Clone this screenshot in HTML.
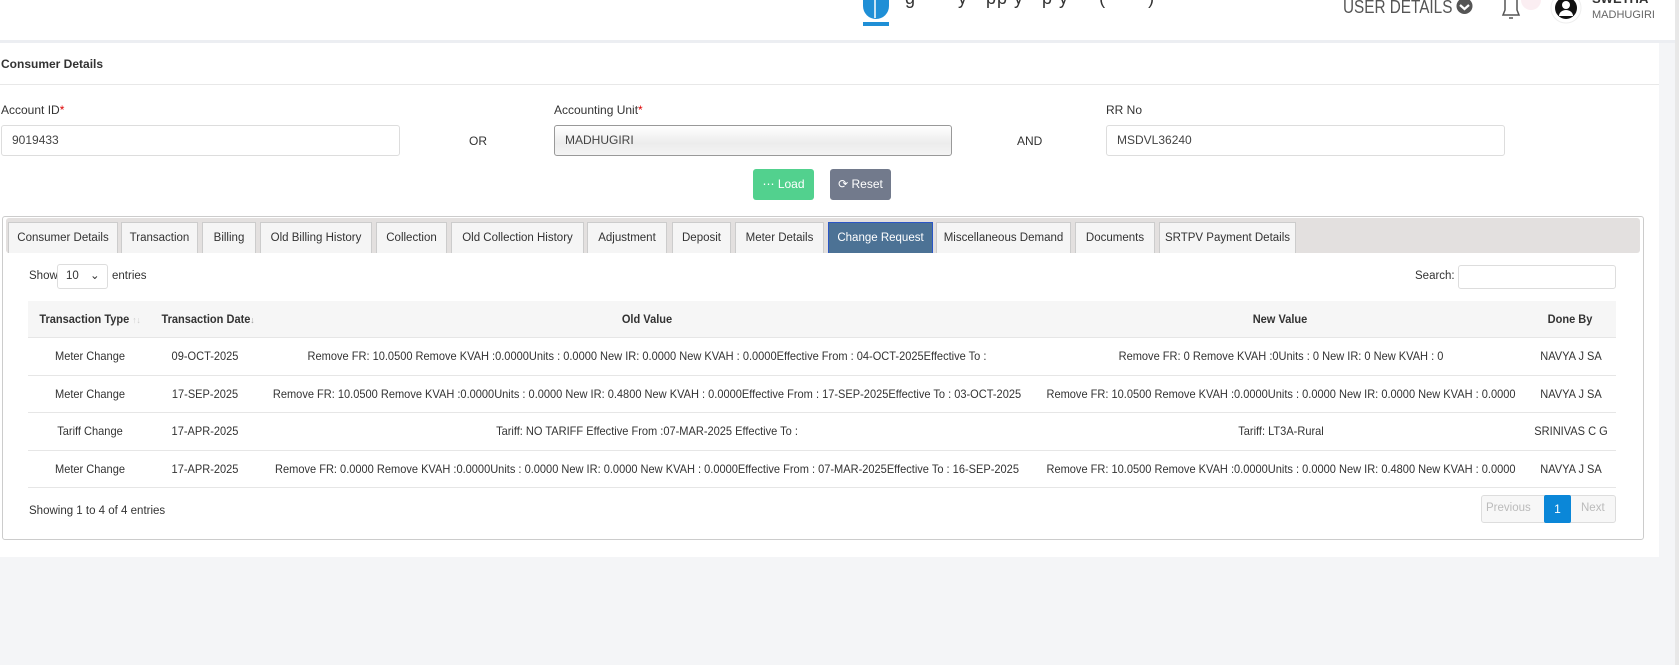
<!DOCTYPE html>
<html><head><meta charset="utf-8">
<style>
*{box-sizing:border-box;margin:0;padding:0}
body{width:1679px;height:665px;overflow:hidden;background:#f4f5f7;font-family:"Liberation Sans",sans-serif;font-size:12px;color:#333;position:relative}
.abs{position:absolute}
.hdr{left:0;top:0;width:1675px;height:40px;background:#fff}
.sb{left:1675px;top:0;width:4px;height:665px;background:#e8e8e8}
.card{left:0;top:43px;width:1659px;height:514px;background:#fff}
.lbl{font-size:12px;color:#333}
.inp{border:1px solid #ddd;border-radius:3px;background:#fff;font-size:12px;padding-left:10px;line-height:29px;color:#444}
.tabs{left:2px;top:216px;width:1642px;height:324px;border:1px solid #ccc;border-radius:3px;background:#fff}
.bar{left:6px;top:218px;width:1634px;height:35px;background:#e3e0df;border-radius:3px}
.tab{top:222px;height:31px;background:#f5f5f5;border:1px solid #ccc;border-bottom:none;font-size:11.5px;color:#333;text-align:center;line-height:30px;white-space:nowrap}
.tab.act{background:#4c7295;color:#fff;border-color:#2a56c6}
.th{top:301px;height:36px;background:#f6f6f6;left:28px;width:1588px}
.c{position:absolute;text-align:center;white-space:nowrap;font-size:12px;transform:translateX(-50%) scaleX(0.92)}
.hl{position:absolute;left:28px;width:1588px;height:1px;background:#e6e6e6}
</style></head><body>
<div class="abs hdr"></div>
<div class="abs" style="left:0;top:40px;width:1675px;height:3px;background:#eceef2"></div>
<div class="abs sb"></div>
<svg class="abs" style="left:860px;top:0" width="32" height="28" viewBox="0 0 32 28"><path d="M3 0h26v6a13 13 0 0 1-26 0z" fill="#1f8fd6"/><path d="M15 0v18" stroke="#fff" stroke-width="1.5"/><rect x="3" y="22" width="26" height="4" fill="#1f8fd6"/></svg>
<div class="abs" style="left:905px;top:-12px;font-size:18px;color:#333;white-space:nowrap;letter-spacing:1px">g &nbsp; &nbsp; &nbsp; y &nbsp; pp y &nbsp; p y &nbsp; &nbsp; ( &nbsp; &nbsp; &nbsp; ) &nbsp;</div>
<div class="abs" style="left:1343px;top:-3px;font-size:18px;color:#555;white-space:nowrap;transform:scaleX(0.85);transform-origin:left">USER DETAILS</div>
<svg class="abs" style="left:1456px;top:0" width="17" height="15"><circle cx="8.5" cy="6" r="8" fill="#555"/><path d="M4 5l4.5 4 4.5-4" stroke="#fff" stroke-width="2.2" fill="none"/></svg>
<svg class="abs" style="left:1500px;top:0" width="22" height="22"><path d="M5 0v10l-2 5h16l-2-5V0" stroke="#555" stroke-width="1.5" fill="none"/><path d="M9 18h4" stroke="#555" stroke-width="1.5"/></svg>
<div class="abs" style="left:1521px;top:0;width:20px;height:10px;background:#fbeef2;border-radius:0 0 10px 10px"></div>
<svg class="abs" style="left:1550px;top:-8px" width="32" height="32"><circle cx="16" cy="16" r="15" fill="#fff" stroke="#eee"/><circle cx="16" cy="16" r="11" fill="#111"/><circle cx="16" cy="13" r="4" fill="#fff"/><path d="M9 24a7 6 0 0 1 14 0" fill="#fff"/></svg>
<div class="abs" style="left:1592px;top:-9px;font-size:13px;font-weight:bold;color:#333">SWETHA</div>
<div class="abs" style="left:1592px;top:9px;font-size:11px;color:#666">MADHUGIRI</div>

<div class="abs card"></div>
<div class="abs" style="left:1px;top:57px;font-size:12px;font-weight:bold;color:#333">Consumer Details</div>
<div class="abs" style="left:0;top:84px;width:1659px;height:1px;background:#e8e8e8"></div>

<div class="abs lbl" style="left:1px;top:103px">Account ID<span style="color:#d00">*</span></div>
<div class="abs lbl" style="left:554px;top:103px">Accounting Unit<span style="color:#d00">*</span></div>
<div class="abs lbl" style="left:1106px;top:103px">RR No</div>
<div class="abs inp" style="left:1px;top:125px;width:399px;height:31px">9019433</div>
<div class="abs lbl" style="left:469px;top:134px">OR</div>
<div class="abs inp" style="left:554px;top:125px;width:398px;height:31px;border-color:#999;background:linear-gradient(#fff,#ececec 60%,#f4f4f4)">MADHUGIRI</div>
<div class="abs lbl" style="left:1017px;top:134px">AND</div>
<div class="abs inp" style="left:1106px;top:125px;width:399px;height:31px">MSDVL36240</div>

<div class="abs" style="left:753px;top:169px;width:61px;height:31px;background:#52d18e;border-radius:3px;color:#fff;font-size:12px;line-height:31px;text-align:center">&#8943; Load</div>
<div class="abs" style="left:830px;top:169px;width:61px;height:31px;background:#727a8c;border-radius:3px;color:#fff;font-size:12px;line-height:31px;text-align:center">&#10227; Reset</div>

<div class="abs tabs"></div>
<div class="abs bar"></div>
<div class="abs tab" style="left:8px;width:110px">Consumer Details</div>
<div class="abs tab" style="left:121px;width:77px">Transaction</div>
<div class="abs tab" style="left:202px;width:54px">Billing</div>
<div class="abs tab" style="left:260px;width:112px">Old Billing History</div>
<div class="abs tab" style="left:376px;width:71px">Collection</div>
<div class="abs tab" style="left:451px;width:133px">Old Collection History</div>
<div class="abs tab" style="left:587px;width:80px">Adjustment</div>
<div class="abs tab" style="left:672px;width:59px">Deposit</div>
<div class="abs tab" style="left:735px;width:89px">Meter Details</div>
<div class="abs tab act" style="left:828px;width:105px">Change Request</div>
<div class="abs tab" style="left:936px;width:135px">Miscellaneous Demand</div>
<div class="abs tab" style="left:1075px;width:80px">Documents</div>
<div class="abs tab" style="left:1159px;width:137px">SRTPV Payment Details</div>

<div class="abs lbl" style="left:29px;top:270px;font-size:11.5px">Show</div>
<div class="abs" style="left:57px;top:264px;width:51px;height:25px;border:1px solid #ddd;border-radius:3px;font-size:11.5px;line-height:23px;padding-left:8px">10 <span style="margin-left:8px">&#8964;</span></div>
<div class="abs lbl" style="left:112px;top:270px;font-size:11.5px">entries</div>
<div class="abs lbl" style="left:1415px;top:270px;font-size:11.5px">Search:</div>
<div class="abs" style="left:1458px;top:265px;width:158px;height:24px;border:1px solid #ddd;border-radius:3px"></div>

<div class="abs th"></div>
<div class="c" style="left:90px;top:312px;font-weight:bold">Transaction Type <span style="color:#ccc;font-weight:normal;font-size:9px">&#8593;&#8595;</span></div>
<div class="c" style="left:208px;top:312px;font-weight:bold">Transaction Date<span style="color:#999;font-weight:normal;font-size:9px">&#8595;</span></div>
<div class="c" style="left:647px;top:312px;font-weight:bold">Old Value</div>
<div class="c" style="left:1280px;top:312px;font-weight:bold">New Value</div>
<div class="c" style="left:1570px;top:312px;font-weight:bold">Done By</div>
<div class="hl" style="top:337px"></div>
<div class="hl" style="top:375px"></div>
<div class="hl" style="top:412px"></div>
<div class="hl" style="top:450px"></div>
<div class="hl" style="top:487px"></div>

<div class="c" style="left:90px;top:349px">Meter Change</div>
<div class="c" style="left:205px;top:349px">09-OCT-2025</div>
<div class="c" style="left:647px;top:349px">Remove FR: 10.0500 Remove KVAH :0.0000Units : 0.0000 New IR: 0.0000 New KVAH : 0.0000Effective From : 04-OCT-2025Effective To :</div>
<div class="c" style="left:1281px;top:349px">Remove FR: 0 Remove KVAH :0Units : 0 New IR: 0 New KVAH : 0</div>
<div class="c" style="left:1571px;top:349px">NAVYA J SA</div>

<div class="c" style="left:90px;top:387px">Meter Change</div>
<div class="c" style="left:205px;top:387px">17-SEP-2025</div>
<div class="c" style="left:647px;top:387px">Remove FR: 10.0500 Remove KVAH :0.0000Units : 0.0000 New IR: 0.4800 New KVAH : 0.0000Effective From : 17-SEP-2025Effective To : 03-OCT-2025</div>
<div class="c" style="left:1281px;top:387px">Remove FR: 10.0500 Remove KVAH :0.0000Units : 0.0000 New IR: 0.0000 New KVAH : 0.0000</div>
<div class="c" style="left:1571px;top:387px">NAVYA J SA</div>

<div class="c" style="left:90px;top:424px">Tariff Change</div>
<div class="c" style="left:205px;top:424px">17-APR-2025</div>
<div class="c" style="left:647px;top:424px">Tariff: NO TARIFF Effective From :07-MAR-2025 Effective To :</div>
<div class="c" style="left:1281px;top:424px">Tariff: LT3A-Rural</div>
<div class="c" style="left:1571px;top:424px">SRINIVAS C G</div>

<div class="c" style="left:90px;top:462px">Meter Change</div>
<div class="c" style="left:205px;top:462px">17-APR-2025</div>
<div class="c" style="left:647px;top:462px">Remove FR: 0.0000 Remove KVAH :0.0000Units : 0.0000 New IR: 0.0000 New KVAH : 0.0000Effective From : 07-MAR-2025Effective To : 16-SEP-2025</div>
<div class="c" style="left:1281px;top:462px">Remove FR: 10.0500 Remove KVAH :0.0000Units : 0.0000 New IR: 0.4800 New KVAH : 0.0000</div>
<div class="c" style="left:1571px;top:462px">NAVYA J SA</div>

<div class="abs lbl" style="left:29px;top:505px;font-size:11.5px">Showing 1 to 4 of 4 entries</div>
<div class="abs" style="left:1481px;top:495px;width:135px;height:28px;border:1px solid #ddd;border-radius:3px;background:#f7f7f7"></div>
<div class="abs" style="left:1486px;top:502px;font-size:11.5px;color:#bbb">Previous</div>
<div class="abs" style="left:1544px;top:495px;width:27px;height:28px;background:#0b87d8;border-radius:2px;color:#fff;text-align:center;line-height:28px;font-size:12px">1</div>
<div class="abs" style="left:1581px;top:502px;font-size:11.5px;color:#bbb">Next</div>
</body></html>
